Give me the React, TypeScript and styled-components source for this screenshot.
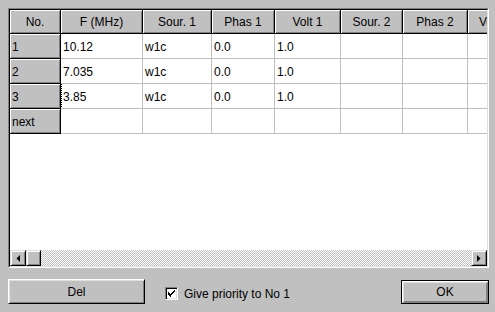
import React from "react";
import styled, { createGlobalStyle, css } from "styled-components";

const Global = createGlobalStyle`
  html, body { margin: 0; padding: 0; background: #c0c0c0; }
  body { font-family: "Liberation Sans", Arial, sans-serif; font-size: 12px; color: #000; }
  * { box-sizing: border-box; }
`;

const Window = styled.div`
  width: 495px;
  height: 312px;
  padding: 8px 6px 0 8px;
  background: #c0c0c0;
  display: flex;
  flex-direction: column;
`;

const GridPanel = styled.div`
  width: 481px;
  height: 260px;
  border-style: solid;
  border-width: 1px;
  border-color: #808080 #ffffff #ffffff #808080;
  display: flex;
  flex-direction: column;
  overflow: hidden;
`;

const GridInner = styled.div`
  flex: 1;
  display: flex;
  flex-direction: column;
  border-style: solid;
  border-width: 1px;
  border-color: #000000 #dfdfdf #dfdfdf #000000;
  min-height: 0;
`;

const Viewport = styled.div`
  flex: 1;
  background: #ffffff;
  overflow: hidden;
  min-height: 0;
`;

const RowLine = styled.div<{ $h: number }>`
  display: flex;
  height: ${(p) => p.$h}px;
  white-space: nowrap;
`;

const raisedFixed = css`
  background: #c0c0c0;
  border-right: 1px solid #000;
  border-bottom: 1px solid #000;
  box-shadow: inset 1px 1px 0 #ffffff, inset -1px -1px 0 #808080;
`;

const HeaderCell = styled.div<{ $w: number }>`
  ${raisedFixed};
  flex: 0 0 ${(p) => p.$w}px;
  width: ${(p) => p.$w}px;
  display: flex;
  align-items: center;
  justify-content: center;
  padding-top: 1px;
  overflow: hidden;
`;

const RowHeader = styled.div<{ $w: number }>`
  ${raisedFixed};
  flex: 0 0 ${(p) => p.$w}px;
  width: ${(p) => p.$w}px;
  display: flex;
  align-items: center;
  padding-left: 2px;
  padding-top: 1px;
`;

const Cell = styled.div<{ $w: number; $focus?: boolean }>`
  flex: 0 0 ${(p) => p.$w}px;
  width: ${(p) => p.$w}px;
  border-right: 1px solid #c0c0c0;
  border-bottom: 1px solid #c0c0c0;
  display: flex;
  align-items: center;
  padding-left: 2px;
  padding-top: 1px;
  overflow: hidden;
  position: relative;
  ${(p) =>
    p.$focus &&
    css`
      &::after {
        content: "";
        position: absolute;
        left: 0;
        top: -1px;
        right: -1px;
        bottom: -1px;
        border: 1px dotted #000;
      }
    `}
`;

const HScroll = styled.div`
  flex: 0 0 16px;
  height: 16px;
  display: flex;
  background: repeating-conic-gradient(#c0c0c0 0 25%, #ffffff 0 50%) 0 0 / 2px 2px;
`;

const raised = css`
  background: #c0c0c0;
  border-style: solid;
  border-width: 1px;
  border-color: #dfdfdf #000000 #000000 #dfdfdf;
  box-shadow: inset 1px 1px 0 #ffffff, inset -1px -1px 0 #808080;
`;

const ScrollBtn = styled.div`
  ${raised};
  flex: 0 0 16px;
  width: 16px;
  height: 16px;
  display: flex;
  align-items: center;
  justify-content: center;
`;

const Thumb = styled.div`
  ${raised};
  flex: 0 0 15px;
  width: 15px;
  height: 16px;
`;

const Track = styled.div`
  flex: 1;
`;

const Footer = styled.div`
  display: flex;
  align-items: center;
  margin-top: 11px;
  height: 25px;
`;

const Button = styled.div<{ $w: number; $default?: boolean }>`
  width: ${(p) => p.$w}px;
  height: ${(p) => (p.$default ? 24 : 25)}px;
  background: #c0c0c0;
  display: flex;
  align-items: center;
  justify-content: center;
  font-size: 12px;
  ${(p) =>
    p.$default
      ? css`
          border: 1px solid #000;
          box-shadow: inset 1px 1px 0 #ffffff, inset -1px -1px 0 #808080,
            inset 2px 2px 0 #dfdfdf, inset -2px -2px 0 #808080;
        `
      : css`
          border-style: solid;
          border-width: 1px;
          border-color: #ffffff #000000 #000000 #ffffff;
          box-shadow: inset 1px 1px 0 #dfdfdf, inset -1px -1px 0 #808080;
        `}
`;

const CheckLabel = styled.label`
  display: flex;
  align-items: center;
  margin-left: 20px;
  margin-top: 4px;
  gap: 6px;
  font-size: 12px;
`;

const CheckBox = styled.span`
  width: 13px;
  height: 13px;
  background: #ffffff;
  border-style: solid;
  border-width: 1px;
  border-color: #808080 #ffffff #ffffff #808080;
  box-shadow: inset 1px 1px 0 #000000, inset -1px -1px 0 #dfdfdf;
  display: flex;
  align-items: center;
  justify-content: center;
`;

const Spacer = styled.div`
  flex: 1;
`;

const cols = [51, 82, 69, 63, 66, 62, 65, 53];
const headers = ["No.", "F (MHz)", "Sour. 1", "Phas 1", "Volt 1", "Sour. 2", "Phas 2", "Volt 2"];
const rows: { label: string; data: string[] }[] = [
  { label: "1", data: ["10.12", "w1c", "0.0", "1.0", "", "", ""] },
  { label: "2", data: ["7.035", "w1c", "0.0", "1.0", "", "", ""] },
  { label: "3", data: ["3.85", "w1c", "0.0", "1.0", "", "", ""] },
  { label: "next", data: ["", "", "", "", "", "", ""] },
];

const LeftArrow = () => (
  <svg width="4" height="7" viewBox="0 0 4 7">
    <path d="M4 0 L4 7 L0.5 3.5 Z" fill="#000" />
  </svg>
);
const RightArrow = () => (
  <svg width="4" height="7" viewBox="0 0 4 7">
    <path d="M0 0 L0 7 L3.5 3.5 Z" fill="#000" />
  </svg>
);

const Check = () => (
  <svg width="7" height="7" viewBox="0 0 7 7" shapeRendering="crispEdges">
    <path
      d="M6 0h1v1h-1zM5 1h2v1h-2zM0 2h1v1h-1zM4 2h2v1h-2zM0 3h2v1h-2zM3 3h2v1h-2zM0 4h4v1h-4zM1 5h2v1h-2zM2 6h1v1h-1z"
      fill="#000"
    />
  </svg>
);

export default function App() {
  return (
    <>
      <Global />
      <Window>
        <GridPanel>
          <GridInner>
            <Viewport>
              <RowLine $h={24}>
                {headers.map((h, i) => (
                  <HeaderCell key={h} $w={cols[i]}>
                    {h}
                  </HeaderCell>
                ))}
              </RowLine>
              {rows.map((r, ri) => (
                <RowLine key={r.label} $h={25}>
                  <RowHeader $w={cols[0]}>{r.label}</RowHeader>
                  {r.data.map((d, ci) => (
                    <Cell key={ci} $w={cols[ci + 1]} $focus={ri === 2 && ci === 0}>
                      {d}
                    </Cell>
                  ))}
                </RowLine>
              ))}
            </Viewport>
            <HScroll>
              <ScrollBtn>
                <LeftArrow />
              </ScrollBtn>
              <Thumb />
              <Track />
              <ScrollBtn>
                <RightArrow />
              </ScrollBtn>
            </HScroll>
          </GridInner>
        </GridPanel>
        <Footer>
          <Button $w={137}>Del</Button>
          <CheckLabel>
            <CheckBox>
              <Check />
            </CheckBox>
            Give priority to No 1
          </CheckLabel>
          <Spacer />
          <Button $w={88} $default>
            OK
          </Button>
        </Footer>
      </Window>
    </>
  );
}
